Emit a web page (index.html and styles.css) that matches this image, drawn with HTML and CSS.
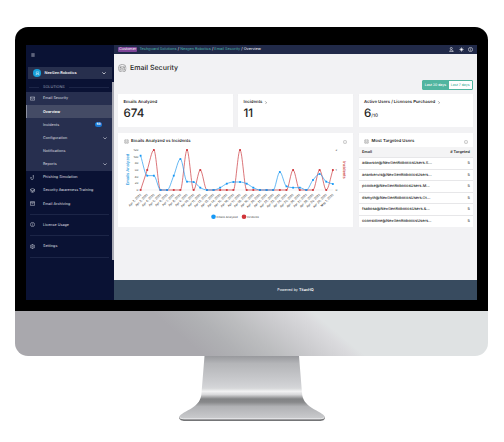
FILE: index.html
```
<!DOCTYPE html>
<html lang="en">
<head>
    <meta charset="UTF-8">
    <meta name="viewport" content="width=device-width, initial-scale=1.0">
    <title>Email Security</title>
    <link rel="stylesheet" href="styles.css">
</head>
<body>
    <svg class="defs" width="0" height="0">
        <symbol id="mail" viewBox="0 0 12 12"><path d="M1 2.5h10v7.5H1zM1 3l5 4 5-4"/></symbol>
        <symbol id="chevron" viewBox="0 0 12 12"><path d="M1 4l5 5 5-5"/></symbol>
        <symbol id="info" viewBox="0 0 12 12"><circle cx="6" cy="6" r="5"/><path d="M6 5.5v3.2M6 3v1.2"/></symbol>
        <symbol id="mail-round" viewBox="0 0 24 24"><circle cx="12" cy="12" r="11"/><path d="M6 8h12v9H6zM6 9l6 4.5L18 9"/></symbol>
    </svg>

    <div class="monitor">
        <div class="bezel">
            <div class="screen">
                <nav class="sidebar">
                    <svg class="icon burger" viewBox="0 0 12 12"><path d="M1 2.5h10M1 6h10M1 9.5h10"/></svg>
                    <div class="account">
                        <span class="avatar"><svg viewBox="0 0 12 12"><path d="M3 2h6v4H3zM1.500 10c0-4 9-4 9 0M4 8v2M8 8v2"/></svg></span>
                        <span class="account-name">NexGen Robotics</span>
                        <svg class="icon chevron"><use href="#chevron"/></svg>
                    </div>
                    <div class="section"><span>SOLUTIONS</span></div>
                    <div class="group">
                        <a class="item"><svg class="icon"><use href="#mail"/></svg><span>Email Security</span></a>
                        <a class="item active"><span>Overview</span></a>
                        <a class="item"><span>Incidents</span><b class="badge">50</b></a>
                        <a class="item"><span>Configuration</span><svg class="icon chevron"><use href="#chevron"/></svg></a>
                        <a class="item"><span>Notifications</span></a>
                        <a class="item"><span>Reports</span><svg class="icon chevron"><use href="#chevron"/></svg></a>
                    </div>
                    <a class="item"><svg class="icon" viewBox="0 0 12 12"><path d="M8 1v7c0 4-6 4-6 0V5l2 2M6.500 2h3"/></svg><span>Phishing Simulation</span></a>
                    <a class="item"><svg class="icon" viewBox="0 0 12 12"><path d="M0 4l6-3 6 3-6 3zM2.500 5.500V9c2 2 5 2 7 0V5.500M11.500 4v5M6 7v3"/></svg><span>Security Awareness Training</span></a>
                    <a class="item"><svg class="icon" viewBox="0 0 12 12"><path d="M1 1.500h10v9H1zM1 4h10M4 6.500h4"/></svg><span>Email Archiving</span></a>
                    <hr>
                    <a class="item"><svg class="icon"><use href="#info"/></svg><span>License Usage</span></a>
                    <hr>
                    <a class="item"><svg class="icon" viewBox="0 0 12 12"><circle cx="6" cy="6" r="4.500"/><circle cx="6" cy="6" r="1.500"/><path d="M6 0v2M6 10v2M.8 3l1.800 1M9.400 8l1.800 1M.8 9l1.800-1M9.400 4l1.800-1"/></svg><span>Settings</span></a>
                    <hr>
                    <div class="scrollbar"></div>
                </nav>

                <div class="page">
                    <div class="topbar">
                        <span class="tag">Customer</span>
                        <span class="crumbs"><a>Techguard Solutions</a> / <a>Nexgen Robotics</a> / <a>Email Security</a> / Overview</span>
                        <div class="tools">
                            <svg class="icon" viewBox="0 0 12 12"><circle cx="5.500" cy="3.500" r="2.500"/><path d="M1.500 11c0-5 8-5 8 0zM9 10h2"/></svg>
                            <svg class="icon" viewBox="0 0 12 12"><circle class="fill" cx="6" cy="6" r="2.500"/><path d="M6 .5v1.500M6 10v1.500M.5 6H2M10 6h1.500M2 2l1 1M9 9l1 1M2 10l1-1M9 3l1-1"/></svg>
                            <svg class="icon"><use href="#info"/></svg>
                        </div>
                    </div>

                    <main>
                        <h1><svg class="icon"><use href="#mail-round"/></svg>Email Security</h1>
                        <div class="range"><span class="on">Last 30 days</span><span>Last 7 days</span></div>

                        <div class="cards">
                            <div class="card stat"><h3>Emails Analyzed</h3><p>674</p></div>
                            <div class="card stat"><h3>Incidents<svg class="icon more" viewBox="0 0 12 12"><path d="M4 1l5 5-5 5"/></svg></h3><p>11</p></div>
                            <div class="card stat"><h3>Active Users / Licenses Purchased<svg class="icon more" viewBox="0 0 12 12"><path d="M4 1l5 5-5 5"/></svg></h3><p>6<small>/10</small></p></div>

                            <div class="card chart">
                                <h2><svg class="icon"><use href="#mail-round"/></svg>Emails Analyzed vs Incidents<svg class="icon info"><use href="#info"/></svg></h2>
                                <svg id="plot" class="plot" viewBox="0 0 235 80">
                                    <text class="axis blue" transform="translate(10.500 22.500) rotate(-90)">Emails Analyzed</text>
                                    <text class="axis red" transform="translate(224.500 23) rotate(90)">Incidents</text>
                                    <circle class="blue-dot" cx="95.500" cy="69.800" r="2.300"/>
                                    <text class="legend" x="98.500" y="70.800">Emails Analyzed</text>
                                    <circle class="red-dot" cx="126" cy="69.800" r="2.300"/>
                                    <text class="legend" x="129" y="70.800">Incidents</text>
                                </svg>
                            </div>

                            <div class="card users">
                                <h2><svg class="icon"><use href="#mail-round"/></svg>Most Targeted Users<svg class="icon info"><use href="#info"/></svg></h2>
                                <div class="row head"><span>Email</span><span># Targeted</span></div>
                                <div class="row"><span>adawson@NexGenRoboticsUsers.S...</span><span>5</span></div>
                                <div class="row"><span>anankervis@NexGenRoboticsUsers...</span><span>5</span></div>
                                <div class="row"><span>pcooke@NexGenRoboticsUsers.M...</span><span>5</span></div>
                                <div class="row"><span>dsmyth@NexGenRoboticsUsers.Ot...</span><span>5</span></div>
                                <div class="row"><span>fsabosa@NexGenRoboticsUsers.&amp;...</span><span>5</span></div>
                                <div class="row"><span>cconsidine@NexGenRoboticsUsers...</span><span>5</span></div>
                            </div>
                        </div>
                    </main>
                    <footer>Powered by <b>TitanHQ</b></footer>
                </div>
            </div>
        </div>
        <div class="chin"></div>
    </div>

    <svg class="stand" viewBox="0 0 148 66">
        <defs>
            <linearGradient id="metal" x1="0" y1="0" x2="0" y2="1">
                <stop offset="0" stop-color="#98999d"/>
                <stop offset=".12" stop-color="#b4b5b8"/>
                <stop offset=".45" stop-color="#cfd0d3"/>
                <stop offset=".51" stop-color="#d6d7d9"/>
                <stop offset=".56" stop-color="#f2f2f3"/>
                <stop offset=".61" stop-color="#d8d8da"/>
                <stop offset=".68" stop-color="#828385"/>
                <stop offset=".73" stop-color="#87888a"/>
                <stop offset=".80" stop-color="#b1b2b5"/>
                <stop offset="1" stop-color="#cbccce"/>
            </linearGradient>
        </defs>
        <path fill="#747577" d="M1 61c0 3 3 4 6 4h134c4 0 6-1 6-4z"/>
        <path fill="url(#metal)" d="M26.500 0h94.500l3 37c.5 7 4 11 10 15 5 3 12 6 13 9 0 1.500-2 2.200-5 2.200H6c-3 0-5-.7-5-2.200 1-3 8-6 13-9 6-4 9-8 9.500-15z"/>
        <path fill="none" stroke="#e6e7e8" stroke-width="1" d="M2 61.500c1 1.200 2.500 1.200 5 1.200h134c2.500 0 4 0 5-1.200"/>
    </svg>

    <script>
        const plot = document.getElementById('plot');
        const left = 22.6;
        const step = 6.63;
        const base = 43;
        const height = 40;

        const emails = [103, 43, 43, 0, 0, 43, 93, 25, 24, 7, 0, 0, 7, 19, 24, 24, 19, 7, 0, 0, 0, 54, 11, 7, 7, 0, 30, 48, 25, 18];
        const incidents = [0, 1, 2, 0, 0, 0, 0, 2, 0, 1, 0, 0, 0, 0, 0, 2, 0, 0, 0, 0, 0, 0, 0, 1, 0, 0, 0, 1, 0, 1];

        function add(name, attrs, text) {
            const el = document.createElementNS('http://www.w3.org/2000/svg', name);
            for (const key in attrs) el.setAttribute(key, attrs[key]);
            if (text !== undefined) el.textContent = text;
            plot.appendChild(el);
        }

        // monotone curve through the points
        function drawSeries(values, max, name) {
            const pts = values.map((v, i) => [left + i * step, base - v / max * height]);
            const slope = pts.map((p, i) => {
                if (i === 0 || i === pts.length - 1) {
                    const a = i === 0 ? 0 : i - 1;
                    return (pts[a + 1][1] - pts[a][1]) / step;
                }
                const d0 = (p[1] - pts[i - 1][1]) / step;
                const d1 = (pts[i + 1][1] - p[1]) / step;
                return d0 * d1 <= 0 ? 0 : 2 * d0 * d1 / (d0 + d1);
            });
            let d = 'M' + pts[0];
            for (let i = 1; i < pts.length; i++) {
                const [x0, y0] = pts[i - 1];
                const [x1, y1] = pts[i];
                d += `C${x0 + step / 3},${y0 + slope[i - 1] * step / 3} ${x1 - step / 3},${y1 - slope[i] * step / 3} ${x1},${y1}`;
            }
            add('path', { d, class: 'line ' + name });
            pts.forEach(p => add('rect', { x: p[0] - 0.9, y: p[1] - 0.9, width: 1.8, height: 1.8, class: name + '-dot' }));
        }

        add('path', { d: `M${left} ${base}H${left + 29 * step}`, class: 'baseline' });
        for (let v = 0; v <= 120; v += 20) {
            add('text', { x: 20.3, y: base - v / 3 + 0.9, class: 'tick end' }, v);
        }
        for (let v = 0; v <= 2; v++) {
            add('text', { x: 217.5, y: base - v * 20 + 0.9, class: 'tick' }, v);
        }
        for (let i = 0; i < 30; i++) {
            const label = i < 29 ? `Apr ${i + 2}, 2025` : 'May 1, 2025';
            add('text', { transform: `translate(${left + i * step + 0.8} 48) rotate(-45)`, class: 'tick date end' }, label);
        }
        drawSeries(incidents, 2, 'red');
        drawSeries(emails, 120, 'blue');
    </script>
</body>
</html>
```
FILE: styles.css
```
* {
    box-sizing: border-box;
}

body {
    margin: 0;
    height: 442px;
    padding-top: 27px;
    overflow: hidden;
    background-color: #fff;
    font-family: Inter, "Liberation Sans", sans-serif;
    font-size: 3.6px;
    line-height: 1.2;
    text-rendering: geometricPrecision;
}

h1, h2, h3, p {
    margin: 0;
}

.defs {
    position: absolute;
}

.icon {
    width: 5px;
    height: 5px;
    flex: none;
    fill: none;
    stroke: currentColor;
    stroke-width: 1.3;
}

.monitor {
    width: 473px;
    height: 329px;
    margin-left: 15px;
    border-radius: 13px;
    overflow: hidden;
}

.bezel {
    height: 284px;
    padding: 17.5px 11px 10px;
    background-color: #000;
}

.chin {
    height: 45px;
    background: linear-gradient(40deg, #a9a8ad 0%, #a9a8ad 36%, #b0b1b4 43%, #bcbdbf 50%, #cbcbce 57%, #dadadd 64%, #dfe2e3 66.5%, #dfe2e3 100%);
}

.stand {
    display: block;
    width: 148px;
    height: 66px;
    margin-left: 178px;
}

.screen {
    display: flex;
    height: 255.5px;
}

/* Sidebar */
.sidebar {
    position: relative;
    width: 88px;
    background-color: #0a1234;
    color: #c9ccd8;
}

.burger {
    display: block;
    width: 4px;
    height: 4px;
    margin: 8px 0 10.5px 4.5px;
    stroke-width: 1.8;
}

.account {
    display: flex;
    align-items: center;
    width: 84px;
    height: 12px;
    margin-left: 2px;
    padding: 0 6.5px 0 5.3px;
    background-color: #272f4d;
    color: #fff;
    font-weight: 600;
}

.avatar {
    display: flex;
    align-items: center;
    justify-content: center;
    width: 7.5px;
    height: 7.5px;
    margin-right: 3.7px;
    border-radius: 50%;
    background-color: #159fd9;
}

.avatar svg {
    width: 5px;
    height: 5px;
    fill: none;
    stroke: #fff;
}

.account-name {
    font-size: 3.85px;
}

.chevron {
    width: 4px;
    height: 4px;
    margin-left: auto;
    stroke-width: 2;
}

.section {
    display: flex;
    align-items: center;
    gap: 4px;
    height: 13px;
    padding: 3px 5px 0 3px;
    font-size: 3.75px;
    color: #9fa4b8;
}

.section::before,
.section::after {
    content: "";
    width: 10px;
    height: 0.5px;
    background-color: #1c2547;
}

.section::after {
    flex: 1;
}

.group {
    width: 86px;
    background-color: #272f4f;
}

.item {
    display: flex;
    align-items: center;
    width: 86px;
    height: 13.17px;
    padding: 0 5.5px 0 4px;
    font-size: 3.7px;
    font-weight: 500;
}

.item span {
    margin-left: 8px;
}

.item span:first-child {
    margin-left: 13px;
}

.item.active {
    background-color: #444b65;
    color: #fff;
    font-weight: 600;
    box-shadow: inset 0.8px 0 #9da1b0;
}

.badge {
    width: 7px;
    height: 5px;
    margin: 0 4.5px 0 auto;
    border-radius: 3px;
    background-color: #1976d2;
    color: #fff;
    font-size: 3px;
    line-height: 5px;
    text-align: center;
}

.sidebar hr {
    height: 0.7px;
    margin: 3.9px 5px 3.4px 4px;
    border: 0;
    background-color: #1c2547;
}

.scrollbar {
    position: absolute;
    top: 37.5px;
    right: 0;
    width: 2px;
    height: 177.5px;
    background-color: #aaabb5;
}

/* Page */
.page {
    display: flex;
    flex-direction: column;
    width: 363px;
    background-color: #f2f2f4;
    color: #222;
}

.topbar {
    display: flex;
    align-items: center;
    height: 9.5px;
    padding: 0 4px;
    background-color: #212a49;
    color: #fff;
    font-size: 3.8px;
}

.tag {
    margin-right: 2.2px;
    padding: 0.3px 1px;
    border-radius: 1px;
    background-color: #7e4497;
    font-size: 3.75px;
}

.crumbs {
    font-size: 3.84px;
}

.crumbs a {
    color: #4fb8ac;
}

.tools {
    display: flex;
    gap: 4.5px;
    margin-left: auto;
}

.fill {
    fill: currentColor;
}

main {
    flex: 1;
    padding: 0 4px;
}

h1 {
    display: flex;
    align-items: center;
    height: 28px;
    font-size: 7px;
    font-weight: 500;
    letter-spacing: 0.02px;
}

h1 .icon {
    width: 8.5px;
    height: 8.5px;
    margin-right: 3.5px;
    color: #555;
}

.range {
    display: flex;
    width: 51.5px;
    height: 9.5px;
    margin: -2px 0 4px auto;
    border: 0.8px solid #50b5a0;
    border-radius: 1px;
    background-color: #fff;
    color: #50b5a0;
    font-size: 3.5px;
    font-weight: 500;
    line-height: 8px;
    text-align: center;
    white-space: nowrap;
}

.range span {
    flex: 1;
}

.range .on {
    flex: none;
    width: 26px;
    background-color: #50b5a0;
    color: #fff;
}

.cards {
    display: grid;
    grid-template-columns: 114.5px 115px 114.5px;
    grid-template-rows: 33.5px 94.5px;
    gap: 5.5px;
}

.card {
    background-color: #fff;
    box-shadow: 0 0.3px 1px rgba(0, 0, 0, 0.08);
}

.stat {
    padding: 6.4px 5.5px;
}

.stat h3 {
    display: flex;
    align-items: center;
    font-size: 4.25px;
    font-weight: 600;
    white-space: nowrap;
}

.stat .more {
    width: 3.5px;
    height: 3.5px;
    margin-left: 1.5px;
}

.stat p {
    margin-top: 2.5px;
    font-size: 11.6px;
    font-weight: 500;
}

.stat small {
    font-size: 4.6px;
}

h2 {
    display: flex;
    align-items: center;
    height: 14px;
    padding: 4px 6px 0 6px;
    font-size: 4.25px;
    font-weight: 600;
}

h2 .icon {
    margin-right: 2px;
    color: #555;
}

h2 .info {
    width: 4px;
    height: 4px;
    margin: 0 0 0 auto;
    color: #999;
}

.chart {
    grid-column: span 2;
}

.plot {
    display: block;
    width: 235px;
    height: 80px;
}

.tick {
    font-size: 2.9px;
    fill: #333;
}

.date {
    font-size: 2.95px;
}

.end {
    text-anchor: end;
}

.axis {
    font-size: 4px;
    font-weight: 500;
    text-anchor: middle;
}

text.blue {
    fill: #1f98e0;
}

text.red {
    fill: #cc3b40;
}

.legend {
    font-size: 2.75px;
    fill: #333;
}

.baseline {
    stroke: #ddd;
    stroke-width: 0.4;
}

.line {
    fill: none;
    stroke-width: 0.7;
}

.line.blue {
    stroke: #2499ee;
}

.line.red {
    stroke: #cc3b40;
}

.blue-dot {
    fill: #1698f6;
}

.red-dot {
    fill: #d03439;
}

.users h2 {
    padding: 4px 5.5px 0;
}

.users h2 .icon:first-child {
    margin-right: 2.5px;
}

.row {
    display: flex;
    align-items: center;
    justify-content: space-between;
    height: 11.55px;
    padding: 0 3px 0 3.5px;
    border-bottom: 0.6px solid #e7e7e9;
    font-size: 3.9px;
    font-weight: 500;
}

.row:last-child {
    border: 0;
}

.row.head {
    background-color: #f4f4f5;
    font-size: 3.8px;
    font-weight: 600;
}

footer {
    height: 20.5px;
    background-color: #384b5f;
    color: #fff;
    font-size: 3.7px;
    line-height: 20.5px;
    text-align: center;
}

footer b {
    font-weight: 600;
}
```
